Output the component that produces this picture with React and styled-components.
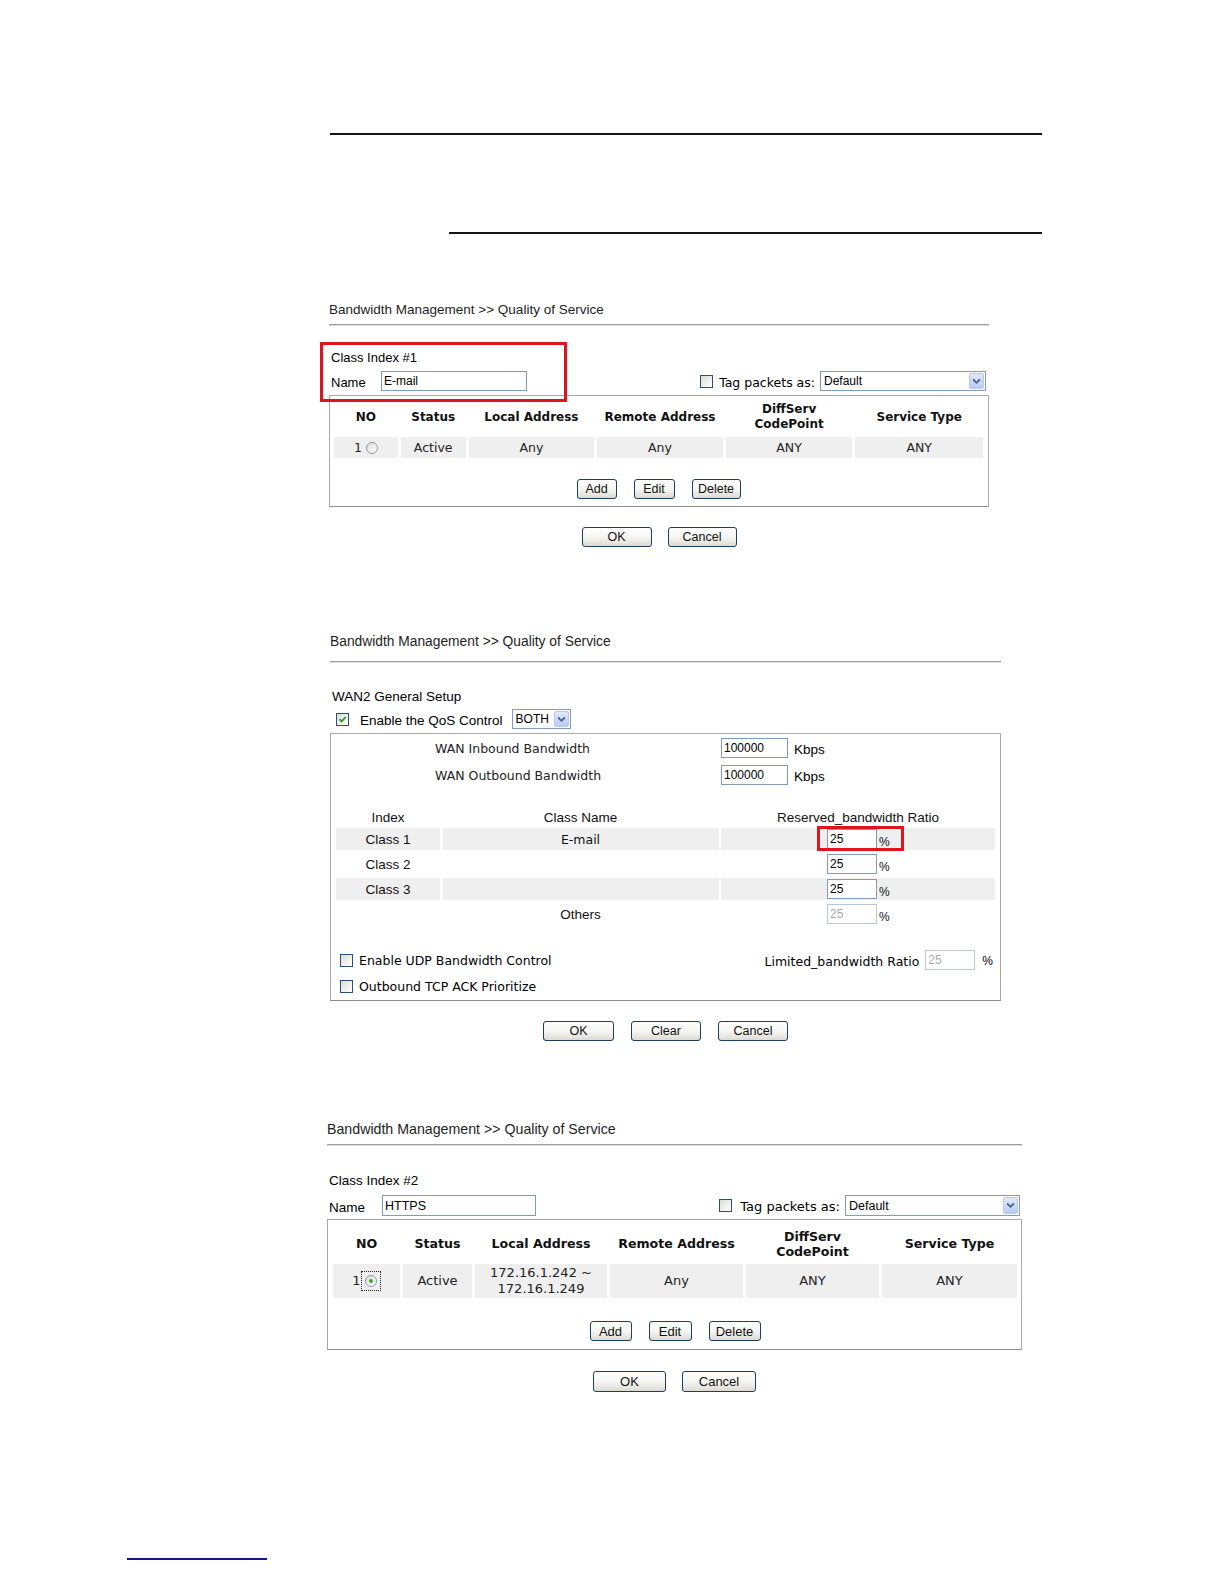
import React from 'react';
import styled, { createGlobalStyle, ThemeProvider } from 'styled-components';

const ARIAL = `"Liberation Sans", Arial, sans-serif`;
const VERD = `"DejaVu Sans", Verdana, sans-serif`;

const Global = createGlobalStyle`
  html, body { margin: 0; padding: 0; background: #fff; }
  body { font-family: ${ARIAL}; color: #000; }
  * { box-sizing: border-box; }
`;

const Page = styled.div`
  width: 1224px;
  height: 1584px;
  display: flex;
  flex-direction: column;
  overflow: hidden;
  background: #fff;
`;

const Rule = styled.div`
  flex-shrink: 0;
  margin-left: ${(p) => p.$left}px;
  width: ${(p) => p.$width}px;
  margin-top: ${(p) => p.$top}px;
  border-top: 2px solid ${(p) => p.$color || '#151515'};
`;

const Section = styled.section`
  flex-shrink: 0;
  margin-left: ${(p) => p.$left}px;
  width: ${(p) => p.$width}px;
  margin-top: ${(p) => p.$top}px;
  display: flex;
  flex-direction: column;
`;

const Title = styled.div`
  font-family: ${ARIAL};
  font-size: ${(p) => p.theme.title}px;
  line-height: 16px;
  height: 16px;
  color: #1e1e1e;
  white-space: nowrap;
`;

const TitleRule = styled.div`
  margin-top: ${(p) => p.$gap}px;
  border-top: 1px solid #9e9e9e;
  border-bottom: 1px solid #dedede;
`;

const HeadBlock = styled.div`
  position: relative;
  margin-top: ${(p) => p.$top}px;
  display: flex;
  flex-direction: column;
`;

const Label = styled.div`
  font-family: ${ARIAL};
  font-size: ${(p) => p.theme.arial}px;
  line-height: 16px;
  height: 16px;
  padding-left: 2px;
  white-space: nowrap;
`;

const RedFrame = styled.div`
  position: absolute;
  left: ${(p) => p.$l}px;
  top: ${(p) => p.$t}px;
  width: ${(p) => p.$w}px;
  height: ${(p) => p.$h}px;
  border: 3px solid #e0141c;
  pointer-events: none;
`;

const NameRow = styled.div`
  display: flex;
  align-items: center;
  height: ${(p) => p.$h}px;
  margin-top: ${(p) => p.$top}px;
`;

const NameText = styled.span`
  font-family: ${ARIAL};
  font-size: ${(p) => p.theme.arial}px;
  width: ${(p) => p.$w}px;
  padding-left: 2px;
  padding-top: 3px;
`;

const TextInput = styled.input`
  width: ${(p) => p.$w}px;
  height: ${(p) => p.$h || 20}px;
  border: 1px solid ${(p) => (p.disabled ? '#b9c6d4' : '#7f9db9')};
  background: #fff;
  font-family: ${ARIAL};
  font-size: ${(p) => p.theme.input}px;
  color: ${(p) => (p.disabled ? '#a9a9a9' : '#000')};
  padding: 0 2px;
  margin: 0;
  outline: none;
  flex-shrink: 0;
`;

const TagGroup = styled.div`
  margin-left: auto;
  margin-right: ${(p) => p.$mr}px;
  display: flex;
  align-items: center;
  height: 100%;
`;

const VText = styled.span`
  font-family: ${VERD};
  font-size: ${(p) => p.theme.ver}px;
  white-space: nowrap;
  margin-left: ${(p) => p.$ml || 0}px;
  margin-right: ${(p) => p.$mr || 0}px;
  padding-top: ${(p) => p.$pt || 0}px;
`;

const AText = styled.span`
  font-family: ${ARIAL};
  font-size: ${(p) => p.$size || p.theme.arial}px;
  white-space: nowrap;
  margin-left: ${(p) => p.$ml || 0}px;
  margin-right: ${(p) => p.$mr || 0}px;
  padding-top: ${(p) => p.$pt || 0}px;
`;

const SelectBox = styled.div`
  width: ${(p) => p.$w}px;
  height: ${(p) => p.$h}px;
  border: 1px solid #7f9db9;
  background: #fff;
  display: flex;
  align-items: stretch;
  flex-shrink: 0;
`;

const SelectText = styled.span`
  flex: 1;
  font-family: ${ARIAL};
  font-size: ${(p) => p.theme.input}px;
  padding-left: 3px;
  display: flex;
  align-items: center;
`;

const SelectArrow = styled.span`
  width: 15px;
  margin: 1px;
  background: linear-gradient(#dfe8fe, #b9cbf5);
  border: 1px solid #b5c8f0;
  border-radius: 2px;
  display: flex;
  align-items: center;
  justify-content: center;
`;

const CheckBox = styled.span`
  width: 13px;
  height: 13px;
  border: 1px solid #2a5078;
  background: linear-gradient(135deg, #dcdcd6, #ffffff);
  display: inline-flex;
  align-items: center;
  justify-content: center;
  flex-shrink: 0;
`;

const RadioDot = styled.span`
  width: 12px;
  height: 12px;
  border-radius: 50%;
  border: 1px solid #8e9cad;
  background: linear-gradient(135deg, #dcdcd6, #ffffff);
  display: inline-flex;
  align-items: center;
  justify-content: center;
  flex-shrink: 0;
  &::after {
    content: '';
    width: 4px;
    height: 4px;
    border-radius: 50%;
    background: ${(p) => (p.$on ? '#2fa52f' : 'transparent')};
  }
`;

const FocusRing = styled.span`
  display: inline-flex;
  padding: 3px;
  border: 1px dotted #222;
`;

const Box = styled.div`
  margin-top: ${(p) => p.$top}px;
  border: 1px solid #a9a9a9;
  border-bottom-color: #8c8c8c;
  padding: ${(p) => p.$pad};
  display: flex;
  flex-direction: column;
`;

const Grid = styled.div`
  display: grid;
  grid-template-columns: ${(p) => p.$cols};
  column-gap: ${(p) => p.$cg}px;
  row-gap: 3px;
`;

const HeadCell = styled.div`
  height: ${(p) => p.theme.headH}px;
  font-family: ${VERD};
  font-weight: bold;
  font-size: ${(p) => p.theme.bold}px;
  line-height: 15px;
  display: flex;
  align-items: center;
  justify-content: center;
  text-align: center;
  color: #111;
`;

const DataCell = styled.div`
  height: ${(p) => p.theme.rowH}px;
  background: #efefef;
  font-family: ${VERD};
  font-size: ${(p) => p.theme.ver}px;
  line-height: 16px;
  display: flex;
  align-items: center;
  justify-content: center;
  text-align: center;
  color: #222;
`;

const ButtonRow = styled.div`
  display: flex;
  justify-content: center;
  gap: ${(p) => p.$gap}px;
  margin-top: ${(p) => p.$top}px;
`;

const Btn = styled.button`
  width: ${(p) => p.$w}px;
  height: ${(p) => p.$h}px;
  padding: 0;
  margin: 0;
  border: 1px solid #1d3f62;
  border-radius: 3px;
  background: linear-gradient(#ffffff, #f4f4f0 55%, #dcdad2);
  font-family: ${ARIAL};
  font-size: ${(p) => p.theme.btn}px;
  color: #111;
  line-height: 1;
`;

/* WAN2 setup parts */
const Row = styled.div`
  display: flex;
  align-items: center;
  height: ${(p) => p.$h}px;
  margin-top: ${(p) => p.$top || 0}px;
  padding-left: ${(p) => p.$pl || 0}px;
  padding-right: ${(p) => p.$pr || 0}px;
  justify-content: ${(p) => p.$justify || 'flex-start'};
`;

const Side = styled.div`
  display: flex;
  align-items: center;
`;

const BwLabel = styled.span`
  width: ${(p) => p.$w}px;
  font-family: ${VERD};
  font-size: ${(p) => p.theme.ver}px;
  color: #222;
  white-space: nowrap;
`;

const ClassCell = styled.div`
  position: relative;
  height: ${(p) => (p.$head ? 16 : 22)}px;
  background: ${(p) => (p.$shade ? '#efefef' : 'transparent')};
  display: flex;
  align-items: center;
  justify-content: ${(p) => (p.$left ? 'flex-start' : 'center')};
  padding-left: ${(p) => p.$pl || 0}px;
  font-family: ${(p) => (p.$verd ? VERD : ARIAL)};
  font-size: ${(p) => (p.$verd ? p.theme.ver : p.theme.arial)}px;
  color: #111;
  white-space: nowrap;
`;

const Pct = styled.span`
  font-family: ${ARIAL};
  font-size: 12px;
  margin-left: 2px;
  align-self: flex-end;
  padding-bottom: 1px;
`;

const BlueRule = styled.div`
  flex-shrink: 0;
  margin-left: 127px;
  width: 140px;
  margin-top: ${(p) => p.$top}px;
  border-top: 2px solid #16168a;
`;

const themes = {
  a: { title: 13.5, arial: 13, ver: 12.5, bold: 12, input: 12, btn: 12.5, headH: 34, rowH: 21 },
  b: { title: 13.8, arial: 13.5, ver: 12.5, bold: 12, input: 12, btn: 12.5, headH: 16, rowH: 22 },
  c: { title: 14.2, arial: 13.5, ver: 13, bold: 12.6, input: 12.5, btn: 13, headH: 35, rowH: 34 },
};

const Chevron = () => (
  <svg width="9" height="7" viewBox="0 0 9 7">
    <polyline points="1.2,1.5 4.5,4.8 7.8,1.5" fill="none" stroke="#4a5f86" strokeWidth="1.8" />
  </svg>
);

const Check = ({ on }) => (
  <CheckBox>
    {on && (
      <svg width="9" height="9" viewBox="0 0 9 9">
        <polyline points="1.5,4.2 3.6,6.4 7.6,2" fill="none" stroke="#21a121" strokeWidth="1.8" />
      </svg>
    )}
  </CheckBox>
);

const Select = ({ w, h, text }) => (
  <SelectBox $w={w} $h={h}>
    <SelectText>{text}</SelectText>
    <SelectArrow>
      <Chevron />
    </SelectArrow>
  </SelectBox>
);

const HEADERS = ['NO', 'Status', 'Local Address', 'Remote Address', ['DiffServ', 'CodePoint'], 'Service Type'];

const ClassPanel = ({ cfg }) => (
  <Section $left={cfg.left} $width={cfg.width} $top={cfg.top}>
    <Title>Bandwidth Management &gt;&gt; Quality of Service</Title>
    <TitleRule $gap={cfg.ruleGap} />
    <HeadBlock $top={cfg.headTop}>
      <Label>Class Index #{cfg.index}</Label>
      <NameRow $h={cfg.nameH} $top={cfg.nameTop}>
        <NameText $w={cfg.nameW}>Name</NameText>
        <TextInput $w={cfg.inputW} $h={cfg.nameH} value={cfg.name} readOnly />
        <TagGroup $mr={cfg.selMr}>
          <Check />
          <VText $ml={cfg.tagGap} $mr={5} $pt={2}>Tag packets as:</VText>
          <Select w={cfg.selW} h={cfg.nameH} text="Default" />
        </TagGroup>
      </NameRow>
      {cfg.frame && <RedFrame $l={-9} $t={-8} $w={247} $h={60} />}
    </HeadBlock>
    <Box $top={cfg.boxTop} $pad={cfg.boxPad}>
      <Grid $cols={cfg.cols} $cg={3}>
        {HEADERS.map((h, i) => (
          <HeadCell key={i}>
            {Array.isArray(h) ? (
              <span>
                {h[0]}
                <br />
                {h[1]}
              </span>
            ) : (
              h
            )}
          </HeadCell>
        ))}
        <DataCell>
          <span>1</span>
          {cfg.selected ? (
            <FocusRing>
              <RadioDot $on />
            </FocusRing>
          ) : (
            <>
              <span style={{ width: 4 }} />
              <RadioDot />
            </>
          )}
        </DataCell>
        <DataCell>Active</DataCell>
        <DataCell>
          {cfg.local.length > 1 ? (
            <span>
              {cfg.local[0]}
              <br />
              {cfg.local[1]}
            </span>
          ) : (
            cfg.local[0]
          )}
        </DataCell>
        <DataCell>Any</DataCell>
        <DataCell>ANY</DataCell>
        <DataCell>ANY</DataCell>
      </Grid>
      <ButtonRow $gap={17} $top={cfg.btnTop}>
        <Btn $w={cfg.bw[0]} $h={cfg.bh}>Add</Btn>
        <Btn $w={cfg.bw[1]} $h={cfg.bh}>Edit</Btn>
        <Btn $w={cfg.bw[2]} $h={cfg.bh}>Delete</Btn>
      </ButtonRow>
    </Box>
    <ButtonRow $gap={16} $top={cfg.okTop}>
      <Btn $w={cfg.okW[0]} $h={cfg.okH}>OK</Btn>
      <Btn $w={cfg.okW[1]} $h={cfg.okH}>Cancel</Btn>
    </ButtonRow>
  </Section>
);

const panel1 = {
  left: 329, width: 660, top: 68, ruleGap: 6, headTop: 24, index: 1, name: 'E-mail',
  nameH: 20, nameTop: 5, nameW: 52, inputW: 146, selMr: 3, selW: 166, tagGap: 6, frame: true,
  boxTop: 4, boxPad: '4px 5px 7px 4px', cols: '64fr 65fr 126fr 126fr 127fr 128fr',
  local: ['Any'], selected: false, btnTop: 21, bw: [40, 41, 49], bh: 20, okTop: 20, okW: [70, 69], okH: 20,
};

const panel3 = {
  left: 327, width: 695, top: 80, ruleGap: 7, headTop: 27, index: 2, name: 'HTTPS',
  nameH: 21, nameTop: 6, nameW: 55, inputW: 154, selMr: 2, selW: 175, tagGap: 8, frame: false,
  boxTop: 3, boxPad: '6px 4px 8px 5px', cols: '67fr 69fr 132fr 133fr 133fr 135fr',
  local: ['172.16.1.242 ~', '172.16.1.249'], selected: true, btnTop: 23, bw: [42, 43, 52], bh: 20,
  okTop: 21, okW: [73, 74], okH: 21,
};

const CLASSES = [
  { idx: 'Class 1', name: 'E-mail', shade: true, frame: true },
  { idx: 'Class 2', name: '', shade: false },
  { idx: 'Class 3', name: '', shade: true },
];

const WanPanel = () => (
  <Section $left={330} $width={671} $top={87}>
    <Title>Bandwidth Management &gt;&gt; Quality of Service</Title>
    <TitleRule $gap={11} />
    <HeadBlock $top={26}>
      <Label>WAN2 General Setup</Label>
    </HeadBlock>
    <Row $h={20} $top={4} $pl={6}>
      <Check on />
      <AText $ml={11} $mr={9} $pt={2}>Enable the QoS Control</AText>
      <Select w={59} h={20} text="BOTH" />
    </Row>
    <Box $top={4} $pad="4px 5px 5px 5px">
      <Row $h={20} $pl={99}>
        <BwLabel $w={286}>WAN Inbound Bandwidth</BwLabel>
        <TextInput $w={67} value="100000" readOnly />
        <AText $ml={6} $pt={3}>Kbps</AText>
      </Row>
      <Row $h={20} $top={7} $pl={99}>
        <BwLabel $w={286}>WAN Outbound Bandwidth</BwLabel>
        <TextInput $w={67} value="100000" readOnly />
        <AText $ml={6} $pt={3}>Kbps</AText>
      </Row>
      <Grid $cols="104fr 276fr 274fr" $cg={2.5} style={{ marginTop: 24 }}>
        <ClassCell $head>Index</ClassCell>
        <ClassCell $head>Class Name</ClassCell>
        <ClassCell $head>Reserved_bandwidth Ratio</ClassCell>
        {CLASSES.map((c) => (
          <React.Fragment key={c.idx}>
            <ClassCell $shade={c.shade}>{c.idx}</ClassCell>
            <ClassCell $shade={c.shade} $verd>{c.name}</ClassCell>
            <ClassCell $shade={c.shade} $left $pl={106}>
              <TextInput $w={50} value="25" readOnly />
              <Pct>%</Pct>
              {c.frame && <RedFrame $l={96} $t={-2} $w={87} $h={25} />}
            </ClassCell>
          </React.Fragment>
        ))}
        <ClassCell />
        <ClassCell>Others</ClassCell>
        <ClassCell $left $pl={106}>
          <TextInput $w={50} value="25" disabled readOnly />
          <Pct>%</Pct>
        </ClassCell>
      </Grid>
      <Row $h={20} $top={25} $pl={4} $pr={2} $justify="space-between">
        <Side>
          <Check />
          <VText $ml={6} $pt={1}>Enable UDP Bandwidth Control</VText>
        </Side>
        <Side>
          <VText $mr={6} $pt={2}>Limited_bandwidth Ratio</VText>
          <TextInput $w={50} value="25" disabled readOnly />
          <AText $ml={7} $size={12} $pt={2}>%</AText>
        </Side>
      </Row>
      <Row $h={18} $top={7} $pl={4}>
        <Check />
        <VText $ml={6} $pt={1}>Outbound TCP ACK Prioritize</VText>
      </Row>
    </Box>
    <ButtonRow $gap={17} $top={20}>
      <Btn $w={71} $h={20}>OK</Btn>
      <Btn $w={70} $h={20}>Clear</Btn>
      <Btn $w={70} $h={20}>Cancel</Btn>
    </ButtonRow>
  </Section>
);

export default function App() {
  return (
    <>
      <Global />
      <Page>
        <Rule $left={330} $width={712} $top={133} />
        <Rule $left={449} $width={593} $top={97} />
        <ThemeProvider theme={themes.a}>
          <ClassPanel cfg={panel1} />
        </ThemeProvider>
        <ThemeProvider theme={themes.b}>
          <WanPanel />
        </ThemeProvider>
        <ThemeProvider theme={themes.c}>
          <ClassPanel cfg={panel3} />
        </ThemeProvider>
        <BlueRule $top={166} />
      </Page>
    </>
  );
}
